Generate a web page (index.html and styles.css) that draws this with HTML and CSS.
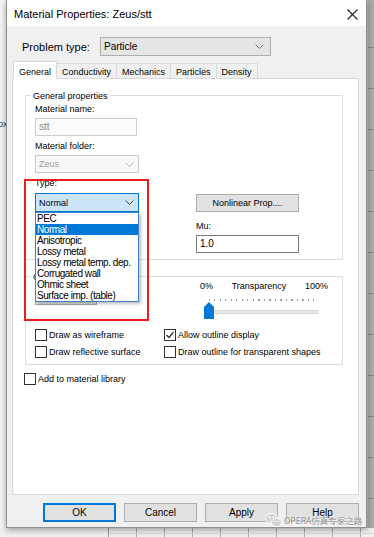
FILE: index.html
```html
<!DOCTYPE html>
<html lang="en">
<head>
    <meta charset="UTF-8">
    <title>Material Properties: Zeus/stt</title>
    <link rel="stylesheet" href="styles.css">
</head>
<body>
    <div class="screen">
        <!-- Background app, left edge -->
        <div class="side-left"><span class="bg-text">ox</span></div>

        <!-- Dialog window -->
        <div class="dialog">
            <div class="titlebar">
                <span class="title">Material Properties: Zeus/stt</span>
                <svg class="close" width="11" height="11" viewBox="0 0 11 11">
                    <path d="M0.5 0.5 L10.5 10.5 M10.5 0.5 L0.5 10.5" stroke="#222" stroke-width="1.1" fill="none"/>
                </svg>
            </div>

            <div class="dialog-body">
                <div class="problem-row">
                    <span class="problem-label">Problem type:</span>
                    <div class="combo combo-problem">
                        <span>Particle</span>
                        <svg class="chevron" width="9" height="5" viewBox="0 0 9 5"><polyline points="0.5,0.5 4.5,4.5 8.5,0.5" stroke="#707070" fill="none"/></svg>
                    </div>
                </div>

                <div class="tabs">
                    <div class="tab active">General</div>
                    <div class="tab">Conductivity</div>
                    <div class="tab">Mechanics</div>
                    <div class="tab">Particles</div>
                    <div class="tab">Density</div>
                </div>

                <div class="tab-panel">
                    <!-- General properties group -->
                    <div class="group group-general">
                        <div class="group-title">General properties</div>
                        <div class="general-cols">
                            <div class="col-left">
                                <div class="field-label">Material name:</div>
                                <div class="textbox disabled">stt</div>
                                <div class="field-label spaced">Material folder:</div>
                                <div class="combo combo-small disabled">
                                    <span>Zeus</span>
                                    <svg class="chevron" width="9" height="5" viewBox="0 0 9 5"><polyline points="0.5,0.5 4.5,4.5 8.5,0.5" stroke="#b5b5b5" fill="none"/></svg>
                                </div>
                                <div class="type-field">
                                    <div class="highlight-box"></div>
                                    <div class="field-label spaced">Type:</div>
                                    <div class="combo combo-small combo-focus">
                                        <span>Normal</span>
                                        <svg class="chevron" width="9" height="5" viewBox="0 0 9 5"><polyline points="0.5,0.5 4.5,4.5 8.5,0.5" stroke="#444" fill="none"/></svg>
                                    </div>
                                    <ul class="dropdown">
                                        <li>PEC</li>
                                        <li class="selected">Normal</li>
                                        <li>Anisotropic</li>
                                        <li>Lossy metal</li>
                                        <li>Lossy metal temp. dep.</li>
                                        <li>Corrugated wall</li>
                                        <li>Ohmic sheet</li>
                                        <li>Surface imp. (table)</li>
                                    </ul>
                                </div>
                            </div>
                            <div class="col-right">
                                <button class="btn btn-nonlinear">Nonlinear Prop....</button>
                                <div class="field-label mu-label">Mu:</div>
                                <div class="textbox">1.0</div>
                            </div>
                        </div>
                    </div>

                    <!-- Display group -->
                    <div class="group group-display">
                        <div class="group-title">Color</div>
                        <div class="display-row">
                            <button class="btn btn-color">Color...</button>
                            <div class="transparency">
                                <div class="slider-labels">
                                    <span>0%</span>
                                    <span>Transparency</span>
                                    <span>100%</span>
                                </div>
                                <div class="ticks"></div>
                                <div class="slider">
                                    <div class="track"></div>
                                    <svg class="thumb" width="10" height="17" viewBox="0 0 10 17"><path d="M0 5 L5 0 L10 5 L10 17 L0 17 Z" fill="#0078d7"/></svg>
                                </div>
                            </div>
                        </div>
                        <div class="check-grid">
                            <label class="check"><span class="box"></span>Draw as wireframe</label>
                            <label class="check"><span class="box checked"><svg width="10" height="10" viewBox="0 0 10 10"><polyline points="1.5,5 4,7.5 8.5,2" stroke="#333" stroke-width="1.2" fill="none"/></svg></span>Allow outline display</label>
                            <label class="check"><span class="box"></span>Draw reflective surface</label>
                            <label class="check"><span class="box"></span>Draw outline for transparent shapes</label>
                        </div>
                    </div>

                    <label class="check check-library"><span class="box"></span>Add to material library</label>
                </div>

                <div class="button-row">
                    <button class="btn btn-dialog default">OK</button>
                    <button class="btn btn-dialog">Cancel</button>
                    <button class="btn btn-dialog">Apply</button>
                    <button class="btn btn-dialog">Help</button>
                </div>
            </div>
        </div>

        <!-- Background app, right edge -->
        <div class="side-right"></div>

        <!-- Watermark -->
        <div class="watermark">
            <svg width="17" height="16" viewBox="0 0 17 16">
                <ellipse cx="6.5" cy="6.5" rx="6" ry="5" fill="#d2d2d2" stroke="#fff"/>
                <ellipse cx="11.5" cy="10.5" rx="5" ry="4.2" fill="#d2d2d2" stroke="#fff"/>
                <circle cx="4.5" cy="5" r="0.9" fill="#fff"/>
                <circle cx="8.5" cy="5" r="0.9" fill="#fff"/>
                <circle cx="10" cy="9.5" r="0.7" fill="#fff"/>
                <circle cx="13" cy="9.5" r="0.7" fill="#fff"/>
            </svg>
            <span>OPERA仿真专家之路</span>
        </div>
    </div>
    <div class="bottom-strip"><div class="bg-grid"></div></div>
</body>
</html>
```

FILE: styles.css
```css
/* Page / desktop */
body {
    margin: 0;
    width: 374px;
    height: 537px;
    overflow: hidden;
    background-color: #f0f0f0;
    font-family: 'Liberation Sans', Arial, sans-serif;
    font-size: 9px;
    color: #000;
}

.screen {
    display: flex;
    height: 528px;
    position: relative;
}

.side-left {
    width: 6px;
    overflow: hidden;
    background-color: #f4f4f4;
}

.bg-text {
    display: block;
    margin-top: 119px;
    margin-left: -2px;
    font-size: 9px;
    color: #333;
}

.side-right {
    flex: 1;
    background: repeating-linear-gradient(to bottom, #a9a9a9 0 40px, #858585 40px 41px);
    background-position: 0 7px;
    border-left: 1px solid #bcbcbc;
}

.bottom-strip {
    height: 9px;
    background-color: #f0f0f0;
}

.bg-grid {
    margin-left: 108px;
    height: 9px;
    border-left: 1px solid #9a9a9a;
    background:
        linear-gradient(#dadada, #dadada) 0 5px / 100% 1px no-repeat,
        repeating-linear-gradient(to right, transparent 0 27px, #aaaaaa 27px 28px);
}

/* Dialog window */
.dialog {
    width: 359px;
    display: flex;
    flex-direction: column;
    background-color: #f0f0f0;
    border: 1px solid #8f8f8f;
    border-top: none;
    box-shadow: 0 2px 6px rgba(0, 0, 0, 0.35);
    z-index: 1;
}

.titlebar {
    height: 26px;
    background-color: #fff;
    display: flex;
    align-items: center;
    justify-content: space-between;
    padding: 0 8px 0 7px;
}

.title {
    font-size: 11px;
    margin-top: 2px;
}

.close {
    margin-top: 2px;
}

.dialog-body {
    flex: 1;
    padding: 11px 7px 5px 5px;
    display: flex;
    flex-direction: column;
}

/* Problem type row */
.problem-row {
    display: flex;
    align-items: center;
    height: 19px;
}

.problem-label {
    font-size: 11px;
    margin-left: 10px;
    width: 78px;
}

.combo {
    display: flex;
    align-items: center;
    justify-content: space-between;
    box-sizing: border-box;
    border: 1px solid #adadad;
    background-color: #e5e5e5;
    padding: 0 6px 0 3px;
}

.combo-problem {
    width: 171px;
    height: 19px;
    font-size: 10px;
}

.combo-small {
    width: 104px;
    height: 18px;
    margin-top: 2px;
    padding-right: 4px;
}

.combo.disabled {
    background-color: #f7f7f7;
    border-color: #cccccc;
    color: #9d9d9d;
}

.combo-focus {
    height: 19px;
    margin-top: 3px;
    background-color: #cce4f7;
    border-color: #0078d7;
}

/* Tabs */
.tabs {
    display: flex;
    align-items: flex-end;
    height: 17px;
    margin-top: 5px;
    padding-left: 1px;
}

.tab {
    height: 15px;
    box-sizing: border-box;
    padding: 2px 5px 0;
    border: 1px solid #d9d9d9;
    border-bottom: none;
    margin-left: -1px;
    background-color: #f0f0f0;
    font-size: 9px;
    line-height: 12px;
}

.tab.active {
    height: 18px;
    margin-bottom: -1px;
    margin-left: 0;
    padding-top: 4px;
    background-color: #fff;
    position: relative;
    z-index: 1;
}

.tab-panel {
    height: 417px;
    box-sizing: border-box;
    background-color: #fff;
    border: 1px solid #d9d9d9;
    padding: 16px 15px 0 12px;
}

/* Group boxes */
.group {
    border: 1px solid #dcdcdc;
    padding: 0 9px 6px 9px;
}

.group-title {
    width: max-content;
    line-height: 14px;
    margin: -7px 0 0 -4px;
    padding: 0 2px;
    background-color: #fff;
}

.general-cols {
    display: flex;
    align-items: flex-start;
    gap: 57px;
}

.col-left {
    width: 104px;
}

.col-right {
    width: 103px;
    display: flex;
    flex-direction: column;
}

.field-label {
    line-height: 13px;
}

.field-label.spaced {
    margin-top: 4px;
}

.mu-label {
    margin-top: 8px;
}

.textbox {
    box-sizing: border-box;
    height: 18px;
    margin-top: 2px;
    border: 1px solid #7a7a7a;
    background-color: #fff;
    padding: 2px 3px;
    font-size: 10px;
    line-height: 12px;
}

.textbox.disabled {
    width: 102px;
    border-color: #cccccc;
    background-color: #fbfbfb;
    color: #8a8a8a;
}

/* Type field with open list */
.type-field {
    position: relative;
}

.highlight-box {
    position: absolute;
    top: 2px;
    left: -11px;
    width: 125px;
    height: 142px;
    box-sizing: border-box;
    border: 2px solid #ec1c1c;
    z-index: 3;
    pointer-events: none;
}

.dropdown {
    position: absolute;
    top: 100%;
    left: 0;
    width: 104px;
    margin: 0;
    padding: 0;
    list-style: none;
    box-sizing: border-box;
    border: 1px solid #3d82cf;
    background-color: #fff;
    box-shadow: 2px 2px 3px rgba(0, 0, 0, 0.25);
    z-index: 2;
    font-size: 10px;
    letter-spacing: -0.45px;
}

.dropdown li {
    height: 11px;
    line-height: 11px;
    padding-left: 1px;
    white-space: nowrap;
}

.dropdown li.selected {
    background-color: #0078d7;
    color: #fff;
}

/* Buttons */
.btn {
    box-sizing: border-box;
    border: 1px solid #adadad;
    background-color: #e1e1e1;
    font-family: 'Liberation Sans', Arial, sans-serif;
    font-size: 9px;
    color: #000;
    padding: 0;
}

.btn-nonlinear {
    height: 18px;
    margin-top: 91px;
}

.btn-color {
    width: 62px;
    height: 18px;
    margin-top: 7px;
}

.button-row {
    display: flex;
    justify-content: flex-end;
    gap: 8px;
    margin-top: 8px;
}

.btn-dialog {
    width: 73px;
    height: 19px;
    font-size: 10px;
}

.btn-dialog.default {
    border: 2px solid #0078d7;
}

/* Display group */
.group-display {
    margin-top: 16px;
}

.group-display .group-title {
    margin-bottom: -4px;
}

.display-row {
    display: flex;
    justify-content: space-between;
    align-items: flex-start;
}

.transparency {
    width: 128px;
    margin-right: 5px;
}

.slider-labels {
    display: flex;
    justify-content: space-between;
    line-height: 13px;
}

.ticks {
    margin: 6px 0 0 9px;
    width: 105px;
    height: 2px;
    background: repeating-linear-gradient(to right, #9a9a9a 0 1px, transparent 1px 5.5px);
}

.slider {
    position: relative;
    height: 17px;
    margin-top: 1px;
    padding-top: 8px;
    box-sizing: border-box;
}

.track {
    margin-left: 11px;
    width: 107px;
    height: 4px;
    box-sizing: border-box;
    background-color: #e7e7e7;
    border: 1px solid #d6d6d6;
}

.thumb {
    position: absolute;
    left: 4px;
    top: 0;
}

.check-grid {
    display: grid;
    grid-template-columns: 129px 1fr;
    row-gap: 5px;
    margin-top: 10px;
}

.check {
    display: flex;
    align-items: center;
    height: 12px;
    white-space: nowrap;
}

.box {
    width: 12px;
    height: 12px;
    box-sizing: border-box;
    border: 1px solid #333;
    background-color: #fff;
    margin-right: 2px;
    display: flex;
    align-items: center;
    justify-content: center;
}

.check-library {
    margin-top: 8px;
    margin-left: -1px;
}

/* Watermark */
.watermark {
    position: absolute;
    left: 265px;
    top: 512px;
    display: flex;
    align-items: center;
    gap: 2px;
    z-index: 5;
    font-family: 'Noto Sans CJK SC', sans-serif;
    font-size: 8.5px;
    color: #8a8a8a;
    text-shadow: 0 0 2px #fff, 0 0 2px #fff;
}
```
